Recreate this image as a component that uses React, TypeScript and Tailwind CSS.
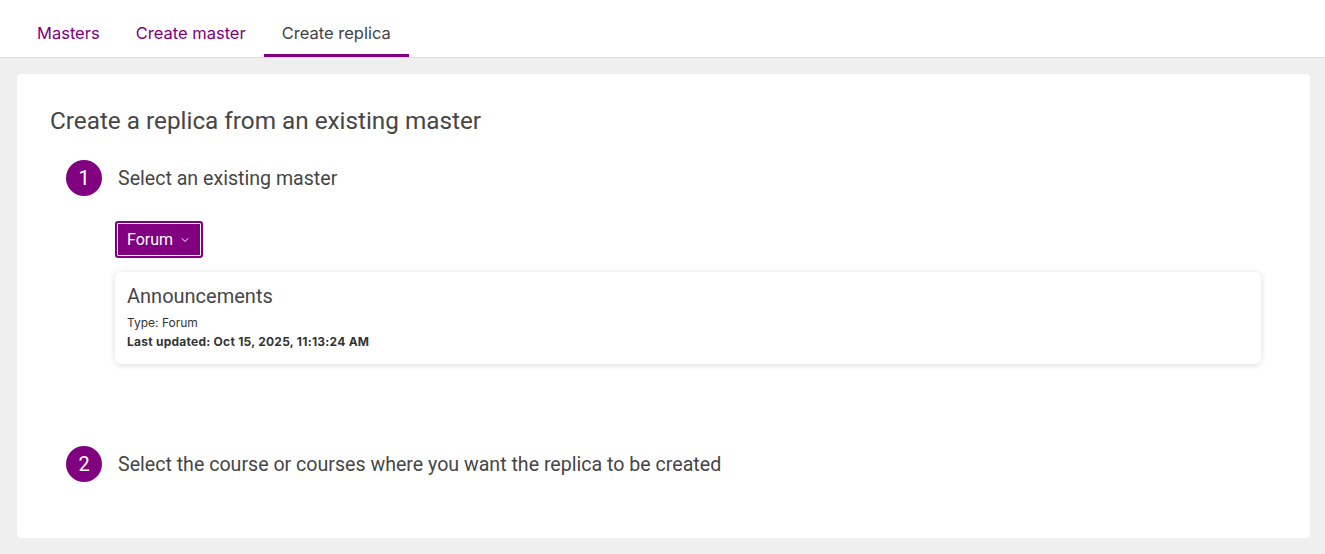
import { ChevronDown } from "lucide-react";

const tabs = [
  { label: "Masters", active: false },
  { label: "Create master", active: false },
  { label: "Create replica", active: true },
];

function Step({ n, label }: { n: number; label: string }) {
  return (
    <div className="flex items-center gap-4">
      <div className="w-9 h-9 rounded-full bg-[#800080] text-white text-[20px] flex items-center justify-center">
        {n}
      </div>
      <span className="text-[19.6px] text-[#464646] pt-px">{label}</span>
    </div>
  );
}

export default function App() {
  return (
    <div className="min-h-[554px] bg-[#efefef] font-['Roboto',sans-serif]">
      <nav className="h-[58px] bg-white border-b border-[#dcdcdc] flex items-end px-[19px]">
        {tabs.map((t) => (
          <button
            key={t.label}
            className={
              t.active
                ? "h-full px-[18px] pt-[12px] text-[16.5px] text-[#3f4248] border-b-[3px] border-[#800080] font-['Inter',sans-serif]"
                : "h-full px-[18px] pt-[12px] text-[16.5px] text-[#800080] border-b-[3px] border-transparent font-['Inter',sans-serif]"
            }
          >
            {t.label}
          </button>
        ))}
      </nav>

      <main className="pt-4 pl-[17px] pr-[15px] pb-4">
        <section className="bg-white rounded h-[464px] pt-[31px] px-[33px]">
          <h1 className="text-[24.3px] text-[#464646] leading-8">
            Create a replica from an existing master
          </h1>

          <div className="pl-4 mt-[23px]">
            <Step n={1} label="Select an existing master" />

            <div className="pl-[49px] mt-[25px]">
              <button className="h-[37px] px-3 rounded-[3px] bg-[#800080] text-white text-[16px] flex items-center gap-1.5 outline outline-1 outline-white -outline-offset-[3px]">
                Forum
                <ChevronDown className="w-3 h-3" strokeWidth={2} />
              </button>

              <div className="mt-[14px] mr-[16px] rounded-md bg-white shadow-[0_1px_6px_rgba(0,0,0,0.15)] px-3 pt-3 pb-[14px]">
                <h3 className="text-[20px] text-[#464646] leading-6">Announcements</h3>
                <div className="font-['Inter',sans-serif] text-[12px] text-[#333]">
                  <p className="mt-[7px] leading-4">Type: Forum</p>
                  <p className="font-bold mt-[3px] leading-4 tracking-[0.25px]">
                    Last updated: Oct 15, 2025, 11:13:24 AM
                  </p>
                </div>
              </div>
            </div>

            <div className="mt-[82px]">
              <Step n={2} label="Select the course or courses where you want the replica to be created" />
            </div>
          </div>
        </section>
      </main>
    </div>
  );
}
